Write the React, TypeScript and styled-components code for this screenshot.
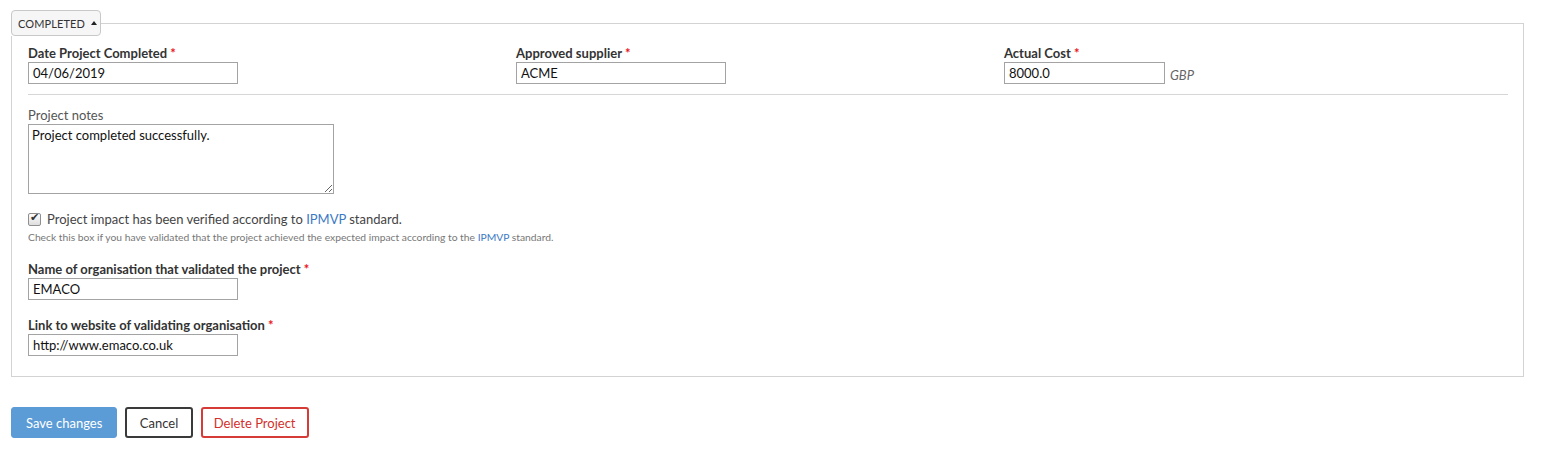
import React from "react";
import styled, { createGlobalStyle } from "styled-components";

const GlobalStyle = createGlobalStyle`
  html, body { margin: 0; padding: 0; background: #fff; }
  body { font-family: Lato, "Open Sans", sans-serif; color: #333; font-size: 13px; }
  * { box-sizing: border-box; }
`;

const Page = styled.div`
  padding: 10px 19px 0 11px;
`;

const Fieldset = styled.fieldset`
  margin: 0;
  padding: 0;
  border: 1px solid #d3d3d3;
  min-width: 0;
`;

const Legend = styled.legend`
  padding: 0;
  margin-left: -1px;
`;

const ToggleButton = styled.button`
  display: flex;
  align-items: center;
  gap: 6px;
  height: 26px;
  width: 90px;
  padding: 0 0 0 6px;
  background: #f6f6f6;
  border: 1px solid #c8c8c8;
  border-radius: 4px;
  font-family: Lato, sans-serif;
  font-size: 11px;
  color: #333;
  text-transform: uppercase;
  letter-spacing: 0.1px;
  cursor: pointer;
`;

const Caret = styled.span`
  width: 0;
  height: 0;
  border-left: 3px solid transparent;
  border-right: 3px solid transparent;
  border-bottom: 4px solid #222;
  margin-top: -1px;
`;

const Content = styled.div`
  padding: 8px 15px 20px 16px;
`;

const TopRow = styled.div`
  display: grid;
  grid-template-columns: 488px 488px 1fr;
`;

const Field = styled.div`
  display: flex;
  flex-direction: column;
  align-items: flex-start;
`;

const Label = styled.label<{ $bold?: boolean }>`
  display: block;
  font-size: 13px;
  line-height: 18px;
  font-weight: ${(p) => (p.$bold ? 700 : 400)};
  color: ${(p) => (p.$bold ? "#333" : "#555")};
`;

const Star = styled.span`
  color: #e8131b;
`;

const InputLine = styled.div`
  display: flex;
  align-items: center;
  gap: 5px;
`;

const TextInput = styled.input<{ $w?: number }>`
  display: block;
  width: ${(p) => p.$w ?? 210}px;
  height: 22px;
  padding: 0 4px;
  border: 1px solid #a3a3a3;
  border-radius: 0;
  font-family: Lato, sans-serif;
  font-size: 13px;
  color: #111;
  background: #fff;
  outline: none;
`;

const Unit = styled.span`
  font-style: italic;
  font-size: 13px;
  color: #666;
  margin-top: 3px;
`;

const Divider = styled.hr`
  border: 0;
  border-top: 1px solid #d6d6d6;
  margin: 10px 0 11px;
`;

const TextArea = styled.textarea`
  display: block;
  width: 306px;
  height: 70px;
  padding: 2px 3px;
  border: 1px solid #a3a3a3;
  font-family: Lato, sans-serif;
  font-size: 13px;
  color: #111;
  resize: both;
  outline: none;
`;

const CheckRow = styled.label`
  display: flex;
  align-items: center;
  gap: 6px;
  margin-top: 16px;
  font-size: 13px;
  line-height: 18px;
  color: #444;
`;

const Check = styled.input`
  appearance: none;
  width: 13px;
  height: 13px;
  margin: 0;
  border: 1px solid #8f8f8f;
  border-radius: 2px;
  background: linear-gradient(#fdfdfd, #dedede);
  position: relative;
  &::after {
    content: "✔";
    position: absolute;
    left: 1px;
    top: -3px;
    font-size: 11px;
    color: #333;
  }
`;

const Link = styled.a`
  color: #3c79c5;
  text-decoration: none;
`;

const Help = styled.div`
  font-size: 10.3px;
  line-height: 14px;
  color: #777;
  margin-top: 2px;
`;

const Stack = styled.div<{ $top: number }>`
  margin-top: ${(p) => p.$top}px;
`;

const Actions = styled.div`
  display: flex;
  gap: 8px;
  margin-top: 30px;
`;

const Button = styled.button<{ $variant: "primary" | "default" | "danger" }>`
  height: 31px;
  padding: 0
    ${(p) => (p.$variant === "primary" ? 14 : p.$variant === "danger" ? 11 : 12.5)}px;
  border-radius: 3px;
  font-family: Lato, sans-serif;
  font-size: 13px;
  cursor: pointer;
  background: ${(p) => (p.$variant === "primary" ? "#5b9bd6" : "#fff")};
  color: ${(p) =>
    p.$variant === "primary" ? "#fff" : p.$variant === "danger" ? "#d2302c" : "#333"};
  border: ${(p) =>
    p.$variant === "primary"
      ? "1px solid #5b9bd6"
      : p.$variant === "danger"
      ? "2px solid #d63b37"
      : "2px solid #3a3a3a"};
`;

export default function App() {
  return (
    <Page>
      <GlobalStyle />
      <Fieldset>
        <Legend>
          <ToggleButton type="button">
            Completed <Caret />
          </ToggleButton>
        </Legend>
        <Content>
          <TopRow>
            <Field>
              <Label $bold>
                Date Project Completed <Star>*</Star>
              </Label>
              <TextInput defaultValue="04/06/2019" />
            </Field>
            <Field>
              <Label $bold>
                Approved supplier <Star>*</Star>
              </Label>
              <TextInput defaultValue="ACME" />
            </Field>
            <Field>
              <Label $bold>
                Actual Cost <Star>*</Star>
              </Label>
              <InputLine>
                <TextInput $w={161} defaultValue="8000.0" />
                <Unit>GBP</Unit>
              </InputLine>
            </Field>
          </TopRow>
          <Divider />
          <Label>Project notes</Label>
          <TextArea defaultValue="Project completed successfully." />
          <CheckRow>
            <Check type="checkbox" defaultChecked />
            <span>
              Project impact has been verified according to <Link href="#">IPMVP</Link> standard.
            </span>
          </CheckRow>
          <Help>
            Check this box if you have validated that the project achieved the expected impact
            according to the <Link href="#">IPMVP</Link> standard.
          </Help>
          <Stack $top={16}>
            <Label $bold>
              Name of organisation that validated the project <Star>*</Star>
            </Label>
            <TextInput defaultValue="EMACO" />
          </Stack>
          <Stack $top={16}>
            <Label $bold>
              Link to website of validating organisation <Star>*</Star>
            </Label>
            <TextInput defaultValue="http://www.emaco.co.uk" />
          </Stack>
        </Content>
      </Fieldset>
      <Actions>
        <Button $variant="primary">Save changes</Button>
        <Button $variant="default">Cancel</Button>
        <Button $variant="danger">Delete Project</Button>
      </Actions>
    </Page>
  );
}
